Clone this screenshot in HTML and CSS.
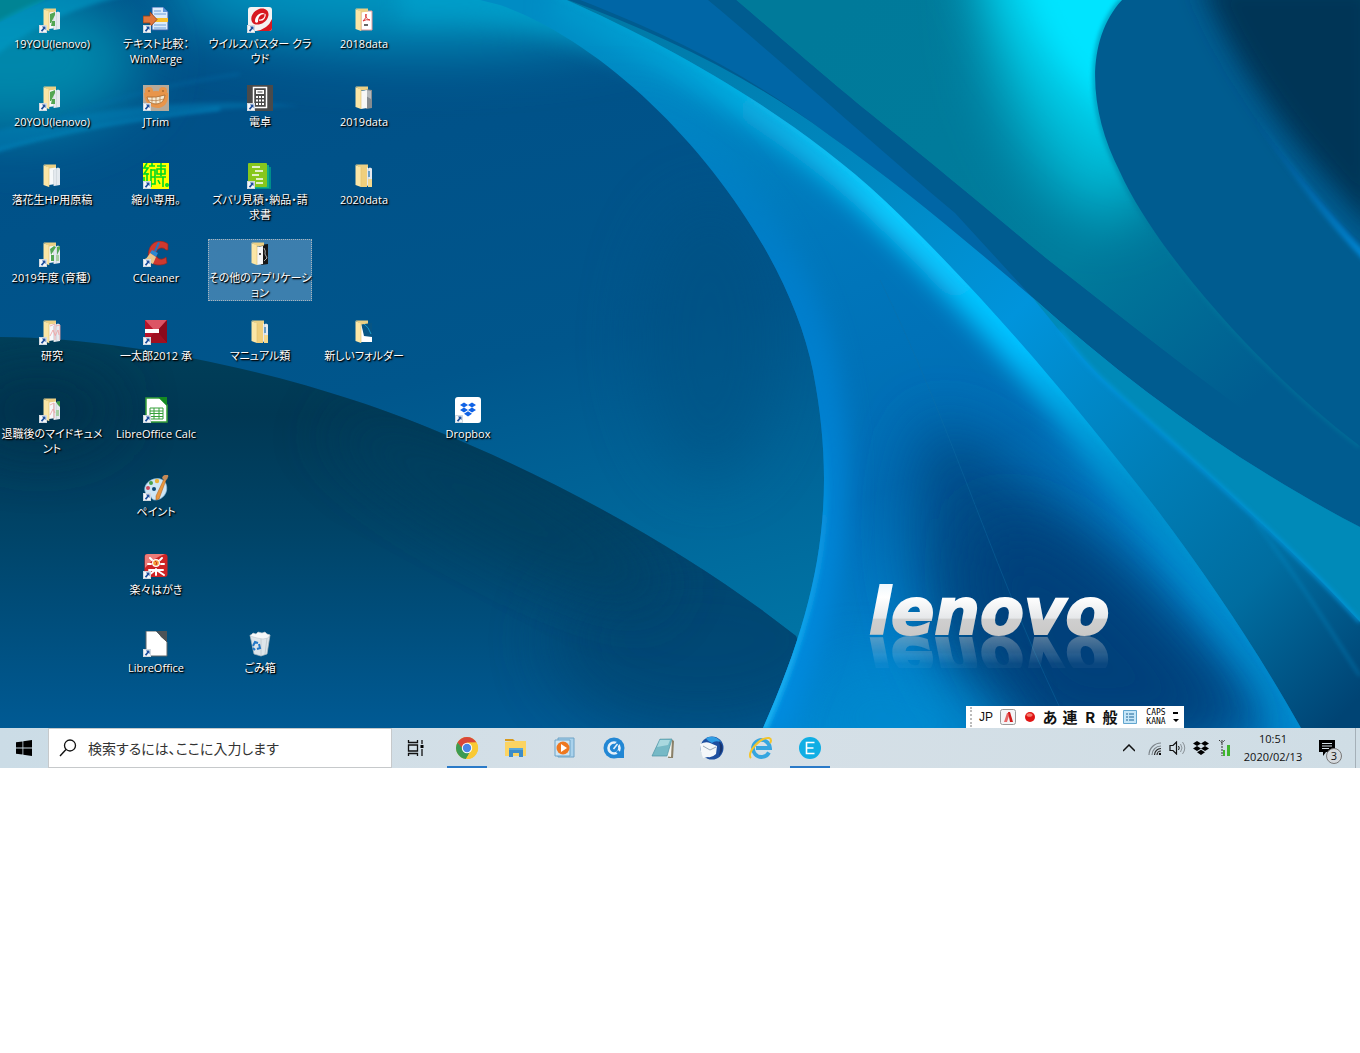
FILE: index.html
```html
<!DOCTYPE html>
<html lang="ja">
<head>
    <meta charset="utf-8">
    <title>デスクトップ</title>
    <link rel="stylesheet" href="styles.css">
</head>
<body>
<svg class="defs" aria-hidden="true">
    <symbol id="arrow" viewBox="0 0 8 8">
        <path d="M0 0h8v8H0z" fill="#f4f7fa"/>
        <path d="M.5.5h7v7h-7z" fill="none" stroke="#b9c3cc" stroke-width=".6"/>
        <path d="M3 1.6h3.5V5L5.4 4 3.3 6.8 1.8 5.8 4.1 2.9z" fill="#1f4f9c"/>
    </symbol>
    <symbol id="folder" viewBox="0 0 26 26">
        <path d="M4.500 1.500H17v3l-7 1z" fill="#ecd084"/>
        <path d="M4.500 2l5.500 2.500V24l-5.500-2z" fill="#fbe6a6"/>
        <path d="M10 4.500V24" stroke="#dfc070" stroke-width=".6"/>
    </symbol>
    <symbol id="papers" viewBox="0 0 26 26">
        <path d="M9 4l6-1.500 2 1V21l-7 1z" fill="#f7f9fa"/>
        <path d="M14 7l5-2.500 2 1V22l-6 1z" fill="#e4e9ee"/>
        <path d="M14.500 7v16M17.500 5.500V22" stroke="#c5ccd3" stroke-width=".5"/>
    </symbol>
    <symbol id="dropbox" viewBox="0 0 16 14">
        <path d="M4 0l4 2.500L4 5 0 2.500zM12 0l4 2.500L12 5 8 2.500zM4 5l4 2.500L4 10 0 7.500zM12 5l4 2.500-4 2.500-4-2.500zM8 8.800l4 2.500L8 14l-4-2.700z"/>
    </symbol>
</svg>

<main class="desktop">
    <svg class="wallpaper" viewBox="0 0 1360 728" preserveAspectRatio="xMidYMid slice" role="img" aria-label="lenovo">
        <defs>
            <linearGradient id="base" x1="0" y1="0" x2=".45" y2="1">
                <stop offset="0" stop-color="#004e86"/><stop offset=".55" stop-color="#00568c"/><stop offset="1" stop-color="#0078a8"/>
            </linearGradient>
            <linearGradient id="dark" x1="0" y1="0" x2="0" y2="1">
                <stop offset="0" stop-color="#00405a"/><stop offset=".2" stop-color="#003854"/><stop offset=".5" stop-color="#004468"/><stop offset="1" stop-color="#005a94"/>
            </linearGradient>
            <linearGradient id="teal" gradientUnits="userSpaceOnUse" x1="850" y1="0" x2="1230" y2="420">
                <stop offset="0" stop-color="#007a9a"/><stop offset=".6" stop-color="#007c9c"/><stop offset="1" stop-color="#005c90"/>
            </linearGradient>
            <linearGradient id="side" gradientUnits="userSpaceOnUse" x1="600" y1="0" x2="1330" y2="728">
                <stop offset="0" stop-color="#0078a4"/><stop offset=".3" stop-color="#0088c0"/><stop offset=".5" stop-color="#0094dc"/><stop offset=".72" stop-color="#007cb4"/><stop offset=".85" stop-color="#006da0"/><stop offset="1" stop-color="#004474"/>
            </linearGradient>
            <linearGradient id="ribbon" gradientUnits="userSpaceOnUse" x1="600" y1="40" x2="900" y2="728">
                <stop offset="0" stop-color="#008cc4"/><stop offset=".35" stop-color="#0078bc"/><stop offset=".7" stop-color="#006cb4"/><stop offset="1" stop-color="#008cd8"/>
            </linearGradient>
            <linearGradient id="shine" gradientUnits="userSpaceOnUse" x1="560" y1="0" x2="1250" y2="660">
                <stop offset="0" stop-color="#00a0d0" stop-opacity=".5"/><stop offset=".4" stop-color="#10ccff"/><stop offset=".6" stop-color="#00c0ff"/><stop offset=".8" stop-color="#0098d0" stop-opacity=".7"/><stop offset="1" stop-color="#0098d0" stop-opacity=".3"/>
            </linearGradient>
            <linearGradient id="inner" gradientUnits="userSpaceOnUse" x1="0" y1="60" x2="0" y2="728">
                <stop offset="0" stop-color="#0084c8" stop-opacity="0"/><stop offset=".35" stop-color="#0080d0" stop-opacity=".8"/><stop offset="1" stop-color="#008ce0"/>
            </linearGradient>
            <linearGradient id="edge" gradientUnits="userSpaceOnUse" x1="0" y1="420" x2="0" y2="728">
                <stop offset="0" stop-color="#10aaf0" stop-opacity="0"/><stop offset="1" stop-color="#18b0f0"/>
            </linearGradient>
            <linearGradient id="rim" gradientUnits="userSpaceOnUse" x1="1257" y1="116" x2="1360" y2="262">
                <stop offset="0" stop-color="#0070b8" stop-opacity="0"/><stop offset="1" stop-color="#0088d8"/>
            </linearGradient>
            <linearGradient id="metal" x1="0" y1="0" x2="0" y2="1">
                <stop offset="0" stop-color="#e4f2fa"/><stop offset=".3" stop-color="#fff"/><stop offset=".58" stop-color="#e6e8ea"/><stop offset=".6" stop-color="#cfcfcf"/><stop offset="1" stop-color="#c4c2c0"/>
            </linearGradient>
            <linearGradient id="fade" gradientUnits="userSpaceOnUse" x1="0" y1="636" x2="0" y2="664">
                <stop offset="0" stop-color="#fff" stop-opacity=".42"/><stop offset="1" stop-color="#fff" stop-opacity=".04"/>
            </linearGradient>
            <filter id="b2" x="-20%" y="-20%" width="140%" height="140%"><feGaussianBlur stdDeviation="2"/></filter>
            <filter id="b12" x="-50%" y="-50%" width="200%" height="200%"><feGaussianBlur stdDeviation="12"/></filter>
            <filter id="b30" x="-80%" y="-80%" width="260%" height="260%"><feGaussianBlur stdDeviation="30"/></filter>
            <clipPath id="clip-ribbon"><path d="M440-10L500 5C640 55 785 230 813 371 838 500 820 600 763 728H1301C1260 655 1210 580 1158 511 1072 400 985 296 884 200 790 112 660 40 555-5z"/></clipPath>
            <clipPath id="clip-teal"><path d="M736 0C800 55 840 90 884 125 940 170 990 212 1048 260 1150 340 1250 420 1360 490V0z"/></clipPath>
            <clipPath id="clip-petal"><path d="M1122 0C1085 40 1088 110 1120 172 1155 250 1260 370 1360 446V0z"/></clipPath>
            <clipPath id="clip-dark"><path d="M0 337C150 338 330 385 439 432 570 485 700 560 796 636L830 728H0z"/></clipPath>
            <mask id="mask-fade"><path d="M850 636h310v32H850z" fill="url(#fade)"/></mask>
        </defs>
        <path d="M0 0h1360v728H0z" fill="url(#base)"/>

        <!-- glow along the top and left -->
        <ellipse cx="420" cy="-10" rx="260" ry="56" fill="#0094c0" filter="url(#b30)"/>
        <path d="M400-30H560Q640 20 680 90 560 10 400 20z" fill="#00a0cc" opacity=".8" filter="url(#b12)"/>
        <ellipse cx="10" cy="60" rx="130" ry="70" fill="#0088ac" filter="url(#b30)"/>
        <path d="M0 0h46L0 22z" fill="#008494"/>
        <path d="M-10 26C20 8 40 0 70-8h70C60 10 30 30-10 60z" fill="#009cc8" opacity=".6" filter="url(#b2)"/>
        <path d="M-10 152C80 122 180 108 300 106 200 96 80 110-10 132z" fill="#0080b8" opacity=".5" filter="url(#b2)"/>
        <path d="M-5 151C60 132 110 122 220 109" fill="none" stroke="#00a4e0" stroke-width="2" opacity=".7" filter="url(#b2)"/>
        <path d="M60 118C120 96 180 82 240 74" fill="none" stroke="#0070ac" stroke-width="2" opacity=".6" filter="url(#b2)"/>
        <ellipse cx="710" cy="340" rx="70" ry="140" fill="#005080" opacity=".5" filter="url(#b30)"/>

        <!-- lower left hill -->
        <path d="M0 337C150 338 330 385 439 432 570 485 700 560 796 636L830 728H0z" fill="url(#dark)"/>
        <g clip-path="url(#clip-dark)">
            <ellipse cx="700" cy="640" rx="150" ry="90" fill="#004470" opacity=".7" filter="url(#b30)"/>
            <ellipse cx="500" cy="510" rx="190" ry="34" fill="#004060" opacity=".8" transform="rotate(28 500 510)" filter="url(#b30)"/>
            <ellipse cx="40" cy="410" rx="80" ry="40" fill="#00304c" opacity=".8" filter="url(#b30)"/>
        </g>

        <!-- upper right -->
        <path d="M560 0C650 30 745 72 829 135 900 185 965 240 1032 297 1130 385 1240 465 1360 527V0z" fill="#005c90"/>
        <path d="M580 0H708C780 60 880 150 955 213L1032 297C965 240 900 185 829 135 745 72 670 35 580 0z" fill="#0066a6"/>
        <g clip-path="url(#clip-teal)">
            <path d="M736 0C800 55 840 90 884 125 940 170 990 212 1048 260 1150 340 1250 420 1360 490V0z" fill="url(#teal)"/>
            <ellipse cx="1075" cy="50" rx="80" ry="170" fill="#00b8d4" transform="rotate(-14 1075 50)" filter="url(#b30)"/>
            <path d="M980-60H1150V150Q1040 110 980-60z" fill="#00e0fc" filter="url(#b30)"/>
            <path d="M1030-30H1130V110Q1060 80 1030-30z" fill="#00e4ff" filter="url(#b12)"/>
        </g>
        <path d="M1122 0C1085 40 1088 110 1120 172 1155 250 1260 370 1360 446" fill="none" stroke="#00789c" stroke-width="5" opacity=".6" filter="url(#b2)"/>
        <path d="M1122 0C1085 40 1088 110 1120 172 1155 250 1260 370 1360 446V0z" fill="#005c90"/>
        <g clip-path="url(#clip-petal)">
            <path d="M1257 116C1290 170 1325 215 1370 262" fill="none" stroke="url(#rim)" stroke-width="7" filter="url(#b2)"/>
            <path d="M1200-20C1230 60 1290 145 1380 236V-20z" fill="#003656" filter="url(#b12)"/>
        </g>

        <!-- band to the right of the ribbon -->
        <path d="M555-5C650 30 745 72 829 135 900 185 965 240 1032 297 1130 385 1240 465 1360 527V728H1290L884 200z" fill="url(#side)"/>
        <path d="M1032 297C1130 385 1240 465 1360 527V622C1290 545 1200 468 1114 390 1080 358 1055 325 1032 297z" fill="#008ab8"/>
        <path d="M1060 330C1080 358 1095 374 1114 390 1200 468 1290 545 1360 622" fill="none" stroke="#0098e0" stroke-width="3" filter="url(#b2)"/>
        <path d="M1255 522C1300 580 1330 630 1360 676" fill="none" stroke="#0090cc" stroke-width="2" opacity=".6" filter="url(#b2)"/>

        <!-- ribbon -->
        <g clip-path="url(#clip-ribbon)">
            <path d="M430-10H1310V738H750z" fill="url(#ribbon)"/>
            <path d="M930 420C1010 450 1140 550 1290 738H1010C930 690 890 560 930 420z" fill="#004c86" filter="url(#b30)"/>
            <path d="M980 520C1050 500 1160 610 1250 738H1050C990 670 960 600 980 520z" fill="#00407a" filter="url(#b30)"/>
            <path d="M840 660L1000 700V760H800z" fill="#0088c8" opacity=".6" filter="url(#b30)"/>
            <path d="M555-5C660 40 790 112 884 200 985 296 1072 400 1158 511 1210 580 1260 655 1301 728" fill="none" stroke="url(#shine)" stroke-width="46" filter="url(#b12)"/>
            <path d="M555-5C660 40 790 112 884 200 985 296 1072 400 1158 511 1210 580 1260 655 1301 728" fill="none" stroke="url(#shine)" stroke-width="8" opacity=".6" filter="url(#b2)"/>
            <path d="M500 5C640 55 785 230 813 371 838 500 820 600 763 728" fill="none" stroke="url(#inner)" stroke-width="50" filter="url(#b12)"/>
            <path d="M813 371C838 500 820 600 763 728" fill="none" stroke="url(#edge)" stroke-width="10" filter="url(#b2)"/>
            <path d="M880 280C950 420 1000 590 1070 728" fill="none" stroke="#1070a8" opacity=".4"/>
        </g>

        <g font-family="DejaVu Sans" font-weight="700" font-style="italic" font-size="64">
            <text id="brand" x="869" y="634" fill="url(#metal)" stroke="url(#metal)" stroke-width="2">lenovo</text>
            <g mask="url(#mask-fade)"><use href="#brand" transform="matrix(1 0 0 -1 0 1272)"/></g>
        </g>
    </svg>

    <div class="icons">
        <ul class="column">
            <li><a class="item" href="#"><svg viewBox="0 0 26 26"><use href="#papers"/><path d="M11 7l5-2v3l-4 8h-1zM13 14h3v5h-4z" fill="#53a653"/><use href="#folder"/><use href="#arrow" x="0" y="18" width="8" height="8"/></svg><span>19YOU(lenovo)</span></a></li>
            <li><a class="item" href="#"><svg viewBox="0 0 26 26"><use href="#papers"/><path d="M11 7l5-2v3l-4 8h-1zM13 14h3v5h-4z" fill="#53a653"/><use href="#folder"/><use href="#arrow" x="0" y="18" width="8" height="8"/></svg><span>20YOU(lenovo)</span></a></li>
            <li><a class="item" href="#"><svg viewBox="0 0 26 26"><use href="#papers"/><use href="#folder"/></svg><span>落花生HP用原稿</span></a></li>
            <li><a class="item" href="#"><svg viewBox="0 0 26 26"><use href="#papers"/><path d="M11 8l4-3 2 1-5 8zM12 14h3v6h-3zM18 6l3-1v3l-3 6z" fill="#53a653"/><path d="M17 14h3v6h-3z" fill="#a7cfa3"/><use href="#folder"/><use href="#arrow" x="0" y="18" width="8" height="8"/></svg><span>2019年度 (育種）</span></a></li>
            <li><a class="item" href="#"><svg viewBox="0 0 26 26"><use href="#papers"/><path d="M11 7l5-2v16M17 7l4-1v15M11 17l3-6 2 5M16 17l3-6 1 5" fill="none" stroke="#eda0a0" stroke-width=".8"/><use href="#folder"/><use href="#arrow" x="0" y="18" width="8" height="8"/></svg><span>研究</span></a></li>
            <li><a class="item" href="#"><svg viewBox="0 0 26 26"><use href="#papers"/><path d="M17 5l4-1v6l-2-2z" fill="#3f9a45"/><path d="M11 8l4-2v15M11 18l3-6 2 4" fill="none" stroke="#eda0a0" stroke-width=".8"/><path d="M17 13h3v6h-3z" fill="#a7cfa3"/><use href="#folder"/><use href="#arrow" x="0" y="18" width="8" height="8"/></svg><span>退職後のマイドキュメ<br>ント</span></a></li>
        </ul>
        <ul class="column">
            <li><a class="item" href="#"><svg viewBox="0 0 26 26"><path d="M9 0h11l5 5v18H9z" fill="#dcebfa" stroke="#2a5da8"/><path d="M20 0v5h5z" fill="#5d94d6"/><path d="M11 4h7M11 7h12M11 18h12M11 21h12" stroke="#6fa0d8"/><path d="M9 11h16v4H9z" fill="#f8c02c"/><path d="M0 9h7V5l7 7.500L7 20v-4H0z" fill="#e0763c" stroke="#8a3c18" stroke-width=".8"/><use href="#arrow" x="0" y="18" width="8" height="8"/></svg><span>テキスト比較：<br>WinMerge</span></a></li>
            <li><a class="item" href="#"><svg viewBox="0 0 26 26"><path d="M0 0h26v26H0z" fill="#b5aa9b"/><circle cx="6" cy="6" r="4" fill="#e8954a"/><circle cx="20" cy="6" r="4" fill="#e8954a"/><path d="M1 8Q13 4 25 8 26 21 16 23 2 23 1 8z" fill="#e8954a"/><path d="M4 12q9 1 18-2-1 9-9 9-8 0-9-7z" fill="#f6ead2" stroke="#a86a30" stroke-width=".8"/><path d="M5 15q8 2 16-1M9 12v6M13 12v7M17 11v7" fill="none" stroke="#a86a30" stroke-width=".6"/><circle cx="6" cy="6" r="1" fill="#a86a30"/><circle cx="20" cy="6" r="1" fill="#a86a30"/><use href="#arrow" x="0" y="18" width="8" height="8"/></svg><span>JTrim</span></a></li>
            <li><a class="item" href="#"><svg viewBox="0 0 26 26"><path d="M0 0h26v26H0z" fill="#ff0"/><g stroke="#00d820" stroke-width="1.600" fill="none"><path d="M4 0L1 5h4L1 11h5M4 10v14M1 14v4M6 3h6M9 0v3M8 6v18M8 7h4v14H8M8 14h4M14 3h9M18 0v13M14 6h8v5h-8zM13 14h10M20 14v10M15 17l2 4"/><circle cx="24" cy="22" r="1.200"/></g><use href="#arrow" x="0" y="18" width="8" height="8"/></svg><span>縮小専用。</span></a></li>
            <li><a class="item" href="#"><svg viewBox="0 0 26 26"><path d="M25 3C17-3 8 1 6 9 3 18 9 25 17 24c3 0 5-1 7-2l-1-6c-4 4-10 2-10-3 0-6 7-8 10-4h2z" fill="#cf392f" stroke="#94261f" stroke-width=".7"/><path d="M15 1l2 1-4 9-2-1z" fill="#2a72be"/><path d="M9 9l6 3-2 4-6-4z" fill="#2c88d0"/><path d="M7 12l6 4-3 7-10-4q5-2 7-7z" fill="#eac78d"/><use href="#arrow" x="0" y="18" width="8" height="8"/></svg><span>CCleaner</span></a></li>
            <li><a class="item" href="#"><svg viewBox="0 0 26 26"><path d="M2 1h22v23H2z" fill="#b8142a"/><path d="M2 1h22l-9 10H11z" fill="#dc5464"/><path d="M24 1v23l-9-10v-3z" fill="#8c0a1c"/><path d="M2 24l9-10h4l9 10z" fill="#a01020"/><path d="M2 10h14v4H2z" fill="#fff"/><use href="#arrow" x="0" y="18" width="8" height="8"/></svg><span>一太郎2012 承</span></a></li>
            <li><a class="item" href="#"><svg viewBox="0 0 26 26"><path d="M3 1h14l7 7v17H3z" fill="#fff" stroke="#36a03a" stroke-width="1.500"/><path d="M15 0h9v9z" fill="#158a22"/><path d="M7 11h13v11H7zM7 14h13M7 16.500h13M7 19.500h13M11 11v11M16 11v11" fill="none" stroke="#36a03a"/><use href="#arrow" x="0" y="18" width="8" height="8"/></svg><span>LibreOffice Calc</span></a></li>
            <li><a class="item" href="#"><svg viewBox="0 0 26 26"><path d="M2 12C5 3 19 0 23 9c3 8-3 16-11 16-4 0-3-4-6-5-3 0-5-4-4-8z" fill="#cfe6f5" stroke="#86b7d8" stroke-width=".7"/><circle cx="5" cy="13" r="2" fill="#c9485b"/><circle cx="8" cy="8" r="2" fill="#46a14b"/><circle cx="14" cy="6" r="2.200" fill="#e8b23a"/><circle cx="11" cy="14" r="2" fill="#0e4874"/><path d="M21 4l2 1-7 19-3 1 0-4z" fill="#e9973e" stroke="#a75b18" stroke-width=".5"/><path d="M19 3q1-4 6-3 1 3-3 6z" fill="#c58a57"/><use href="#arrow" x="0" y="18" width="8" height="8"/></svg><span>ペイント</span></a></li>
            <li><a class="item" href="#"><svg viewBox="0 0 26 26"><rect x="1.500" y="1" width="23" height="23" rx="3" fill="#cf2325"/><path d="M2 3q0-2 3-2h17Q10 5 2 15z" fill="#ed7b78"/><g stroke="#fff" stroke-width="2" fill="none" stroke-linecap="round"><path d="M7 5l2 2M19 5l-2 2M5 11l3 0M21 11l-3 0M6 17h14M13 16v6M11 18l-5 4M15 18l6 4"/></g><circle cx="13" cy="10" r="4" fill="#fff"/><circle cx="13" cy="10" r="2.800" fill="#f4a035"/><path d="M12 8q3 1 1 4" fill="none" stroke="#cf2325"/><use href="#arrow" x="0" y="18" width="8" height="8"/></svg><span>楽々はがき</span></a></li>
            <li><a class="item" href="#"><svg viewBox="0 0 26 26"><path d="M3 0h10l11 11v14H3z" fill="#fff" stroke="#5d6469"/><path d="M14 0h10v11L18 6z" fill="#4d5357"/><use href="#arrow" x="0" y="18" width="8" height="8"/></svg><span>LibreOffice</span></a></li>
        </ul>
        <ul class="column">
            <li><a class="item" href="#"><svg viewBox="0 0 26 26"><rect x="1" y="0" width="24" height="24" rx="3" fill="#f3f3f3"/><path d="M25 12v9q0 3-3 3H9q12-2 16-12z" fill="#d71920"/><path d="M12 2c7-2 11 3 9 8-2 6-9 9-14 7-5-3-3-12 5-15z" fill="#d71920"/><path d="M8 14c0-5 6-10 10-7-5 0-7 3-7 8-1 1-3 1-3-1z" fill="#fff"/><path d="M12 13c4 1 7-3 6-6" fill="none" stroke="#fff" stroke-width="1.200"/><use href="#arrow" x="0" y="18" width="8" height="8"/></svg><span>ウイルスバスター クラ<br>ウド</span></a></li>
            <li><a class="item" href="#"><svg viewBox="0 0 26 26"><path d="M0 0h26v26H0z" fill="#4a4a4a"/><path d="M6.500 2.500h13v20h-13z" fill="none" stroke="#fff" stroke-width="1.500"/><path d="M9 5h8v4H9z" fill="#fff"/><path d="M10.500 7h5" stroke="#4a4a4a"/><path d="M9 11h2v2H9zM12 11h2v2h-2zM15 11h2v2h-2zM9 14.500h2v2H9zM12 14.500h2v2h-2zM15 14.500h2v2h-2zM9 18h2v2H9zM12 18h2v2h-2zM15 18h2v2h-2z" fill="#fff"/><use href="#arrow" x="0" y="18" width="8" height="8"/></svg><span>電卓</span></a></li>
            <li><a class="item" href="#"><svg viewBox="0 0 26 26"><path d="M8 4h16v22H8z" fill="#008e8a"/><path d="M5 2h17v23H5z" fill="#12ad85"/><rect x="1" y="0" width="19" height="24" rx="1" fill="#87c71c"/><path d="M5 4h8M8 8h8M5 12h7M9 16h7M9 20h7" stroke="#fff" stroke-width="1.600"/><use href="#arrow" x="0" y="18" width="8" height="8"/></svg><span>ズバリ見積・納品・請<br>求書</span></a></li>
            <li><a class="item selected" href="#"><svg viewBox="0 0 26 26"><path d="M12 4l9-1v20l-7 1z" fill="#161616"/><path d="M17 7q2 3 1 6l2 4-3 3" fill="none" stroke="#aaa"/><path d="M10 6l6-1v18l-6 1z" fill="#f6f6f6"/><path d="M12 12h2v2h-2z" fill="#555"/><use href="#folder"/></svg><span>その他のアプリケーシ<br>ョン</span></a></li>
            <li><a class="item" href="#"><svg viewBox="0 0 26 26"><use href="#papers"/><path d="M10 4h6v20h-6z" fill="#f0cf7c"/><path d="M17 8h2v6h-2z" fill="#6b9fc6"/><path d="M17 16h4v8h-4z" fill="#f4d88d"/><use href="#folder"/></svg><span>マニュアル類</span></a></li>
            <li class="row9"><a class="item" href="#"><svg viewBox="0 0 26 26"><path d="M3 4l20 0-3 19-6 2-7-2z" fill="#dde5ea" stroke="#aebac2" stroke-width=".7"/><path d="M3 5l3-3 3 1 2-2 4 1 3-1 2 2 3 1-2 3-5 1-6-1z" fill="#f6f8f9" stroke="#bfc8ce" stroke-width=".6"/><path d="M14 8l0 16M20 7l-2 16" stroke="#c2ccd2"/><path d="M6 15l2-4 3 1M12 13l1 4-3 1M8 19l-2-2" fill="none" stroke="#2278c8" stroke-width="2"/></svg><span>ごみ箱</span></a></li>
        </ul>
        <ul class="column">
            <li><a class="item" href="#"><svg viewBox="0 0 26 26"><path d="M10 4h11v19H10z" fill="#fff" stroke="#e39a98"/><path d="M12 14q4-3 3-7-1 5 4 6-4-1-7 1z" fill="none" stroke="#dc3c3c"/><path d="M13 17h4v2h-4z" fill="#666"/><use href="#folder"/></svg><span>2018data</span></a></li>
            <li><a class="item" href="#"><svg viewBox="0 0 26 26"><path d="M14 4l7 1v18l-6 1z" fill="#858b90"/><path d="M15 5l5 1v8l-5-3z" fill="#b4b8bb"/><path d="M10 6l6-1v18l-6 1z" fill="#f7f7f7"/><use href="#folder"/></svg><span>2019data</span></a></li>
            <li><a class="item" href="#"><svg viewBox="0 0 26 26"><use href="#papers"/><path d="M10 4h6v20h-6z" fill="#f0cf7c"/><path d="M17 8h2v6h-2z" fill="#6b9fc6"/><path d="M17 16h4v8h-4z" fill="#f4d88d"/><use href="#folder"/></svg><span>2020data</span></a></li>
            <li class="row5"><a class="item" href="#"><svg viewBox="0 0 26 26"><path d="M10 4h11v19H10z" fill="#fff"/><path d="M10 4h11v14l-8-1z" fill="#075584"/><path d="M12 4q6 4 8 11" fill="none" stroke="#1b9ccc"/><use href="#folder"/></svg><span>新しいフォルダー</span></a></li>
        </ul>
        <ul class="column">
            <li class="row6"><a class="item" href="#"><svg viewBox="0 0 26 26"><rect width="26" height="26" rx="3" fill="#fff"/><use href="#dropbox" x="5" y="5" width="16" height="15" fill="#0f62e6"/><use href="#arrow" x="0" y="18" width="8" height="8"/></svg><span>Dropbox</span></a></li>
        </ul>
    </div>

    <div class="ime">
        <span class="grip"></span>
        <button class="lang">JP</button>
        <button aria-label="ATOK"><svg width="16" height="16" viewBox="0 0 16 16"><rect x=".5" y=".5" width="15" height="15" rx="2" fill="#f4f4f6" stroke="#999"/><path d="M4 13l3-9h2v3l-2 6z" fill="#e86868"/><path d="M8 3h2l3 10h-3z" fill="#d01818"/></svg></button>
        <button aria-label="記録"><svg width="12" height="12" viewBox="0 0 12 12"><circle cx="6" cy="6" r="5" fill="#e01414"/><ellipse cx="5.500" cy="4" rx="3" ry="1.800" fill="#f47a6c"/></svg></button>
        <button>あ</button>
        <button>連</button>
        <button>R</button>
        <button>般</button>
        <button aria-label="メニュー"><svg width="14" height="14" viewBox="0 0 14 14"><path d="M.5.5h13v13H.5z" fill="#c6e6f8" stroke="#62a6cf"/><path d="M3 4h2M3 7h2M3 10h2M6 4h5M6 7h5M6 10h5" stroke="#1d6496"/></svg></button>
        <span class="locks"><span>CAPS</span><span>KANA</span></span>
        <button aria-label="オプション"><svg width="6" height="12" viewBox="0 0 6 12"><path d="M0 1h5v2H0zM0 8h6L3 11z"/></svg></button>
    </div>
</main>

<footer class="taskbar">
    <button class="start" aria-label="スタート"><svg width="16" height="16" viewBox="0 0 16 16"><path d="M0 2.300L6.500 1.400V7.600H0zM7.300 1.300L16 0v7.600H7.300zM0 8.400h6.500v6.200L0 13.700zM7.300 8.400H16V16L7.300 14.700z"/></svg></button>
    <div class="search">
        <label for="q" aria-label="検索"><svg width="18" height="18" viewBox="0 0 18 18"><circle cx="11" cy="6.500" r="5.500" fill="none" stroke="#111" stroke-width="1.300"/><path d="M7 10.500L1 17" stroke="#111" stroke-width="1.400"/></svg></label>
        <input id="q" type="text" placeholder="検索するには、ここに入力します">
    </div>
    <button class="start" aria-label="タスク ビュー"><svg width="18" height="16" viewBox="0 0 18 16"><path d="M1.500 0v2.500h9V0M1.500 16v-2.500h9V16M1.500 5h9v6h-9zM15 0v4M15 9v7" fill="none" stroke="#111" stroke-width="1.300"/><path d="M13.500 5h3v3h-3z"/></svg></button>
    <nav class="apps">
        <button class="running" aria-label="Chrome"><svg width="24" height="24" viewBox="0 0 24 24"><circle cx="12" cy="12" r="11" fill="#f9c934"/><path d="M2.500 6.500A11 11 0 0 1 21.500 6.500L12 7l-3 9z" fill="#d9473a"/><path d="M2.500 6.500A11 11 0 0 0 11 23l5-9-8-1z" fill="#3c9b53"/><path d="M11 23A11 11 0 0 0 21.500 6.500H12l4 8z" fill="#f9c934"/><circle cx="12" cy="12" r="5.200" fill="#fff"/><circle cx="12" cy="12" r="4.200" fill="#4a86e8"/></svg></button>
        <button aria-label="エクスプローラー"><svg width="22" height="20" viewBox="0 0 22 20"><path d="M0 1h8l2 2H0z" fill="#d99a1c"/><path d="M0 4L9 3h12v15H0z" fill="#fcd462"/><path d="M4 10h14v9h-4v-4H8v4H4z" fill="#3c8cc8"/><path d="M4 10h14v2H4z" fill="#5aa8da"/></svg></button>
        <button aria-label="メディア プレーヤー"><svg width="22" height="22" viewBox="0 0 22 22"><path d="M4 1h16v19H4z" fill="#a9d2ec" stroke="#6ea3c6"/><path d="M1 3h15v16H1z" fill="#cde5f4" stroke="#6ea3c6"/><circle cx="9" cy="11" r="6.500" fill="#ee7820"/><path d="M7 7l6 4-6 4z" fill="#fff"/></svg></button>
        <button aria-label="QuickTime"><svg width="22" height="22" viewBox="0 0 22 22"><circle cx="11" cy="11" r="10.500" fill="#2287d4"/><path d="M12 11h9v10h-9z" fill="#2287d4"/><circle cx="11" cy="11" r="5.500" fill="none" stroke="#e6f1fa" stroke-width="2.600"/><path d="M10 12l6-7" stroke="#2287d4" stroke-width="3.500"/><path d="M10.500 12l4-5" stroke="#e6f1fa" stroke-width="1.500"/><path d="M14 14l3 3" stroke="#2287d4" stroke-width="3"/></svg></button>
        <button aria-label="メモ帳"><svg width="24" height="22" viewBox="0 0 24 22"><path d="M20 2l3 2-1 17-5 0z" fill="#8a8068"/><path d="M9 1l12 1-1 18-5-1z" fill="#f4f4ee"/><path d="M9 2h12l-5 17H1z" fill="#76b9c6" stroke="#4e93a3" stroke-width=".7"/><path d="M9 3h10l-2 5-11 2z" fill="#a9d8df"/></svg></button>
        <button aria-label="Thunderbird"><svg width="26" height="24" viewBox="0 0 26 24"><circle cx="13" cy="12" r="11.500" fill="#1e4fa0"/><path d="M7 2q9-4 15 4-6-2-9 1-6-3-6-5z" fill="#2f9de4"/><path d="M1 8q6-3 10-1l7 3-1 8q-4 4-8 3l-5 1-2-6z" fill="#f4f7fa"/><path d="M4 10l7 4 6-3" fill="none" stroke="#9aa9b8"/><path d="M20 5q7 7 0 15 2-8 0-15z" fill="#17346e"/></svg></button>
        <button aria-label="Internet Explorer"><svg width="24" height="24" viewBox="0 0 24 24"><path d="M20 16.500a8.500 8.500 0 1 1 1-4.500H7" fill="none" stroke="#36a6e0" stroke-width="3.800"/><path d="M2 22C-3 17 11 1 20 2c3 1 2 4 1 5" fill="none" stroke="#f4c52e" stroke-width="2"/></svg></button>
        <button class="running" aria-label="E"><svg width="22" height="22" viewBox="0 0 22 22"><circle cx="11" cy="11" r="11" fill="#10aee4"/><path d="M15.500 5.500H7.500v11h8M7.500 11h7" fill="none" stroke="#fff" stroke-width="1.600"/></svg></button>
    </nav>
    <div class="tray">
        <button aria-label="隠れているインジケーター"><svg width="12" height="8" viewBox="0 0 12 8"><path d="M0 7l6-6 6 6" fill="none" stroke="#111" stroke-width="1.500"/></svg></button>
        <button aria-label="ネットワーク"><svg width="13" height="13" viewBox="0 0 13 13"><path d="M1 13A12 12 0 0 1 13 1M4 13a9 9 0 0 1 9-9" fill="none" stroke="#7c848a" stroke-width="1.200"/><path d="M6.500 13A6.500 6.500 0 0 1 13 6.500M9 13a4 4 0 0 1 4-4" fill="none" stroke="#222" stroke-width="1.200"/><circle cx="12" cy="12" r="1.200"/></svg></button>
        <button aria-label="音量"><svg width="17" height="14" viewBox="0 0 17 14"><path d="M1 4.500h3L7.500 1v12L4 9.500H1z" fill="none" stroke="#111" stroke-width="1.200"/><path d="M9.500 5q1.500 2 0 4" fill="none" stroke="#111"/><path d="M11.500 3q3 4 0 8M13.500 1q4.500 6 0 12" fill="none" stroke="#8a9298"/></svg></button>
        <button aria-label="Dropbox"><svg width="16" height="14"><use href="#dropbox"/></svg></button>
        <button aria-label="電波"><svg width="12" height="18" viewBox="0 0 12 18"><path d="M0 1l3 3 3-3M3 1v16" fill="none" stroke="#333" stroke-dasharray="2 1"/><path d="M4 11h2v6H4zM8 6h3v11H8z" fill="#3fb52e"/></svg></button>
        <button class="clock"><time>10:51</time><time>2020/02/13</time></button>
        <button class="notice" aria-label="通知"><svg width="16" height="16" viewBox="0 0 16 16"><path d="M0 0h16v12H7l-3 4v-4H0z"/><path d="M3 3.500h10M3 6h10M3 8.500h7" stroke="#d3dfe6"/></svg><span class="badge">3</span></button>
        <button class="peek" aria-label="デスクトップの表示"></button>
    </div>
</footer>
</body>
</html>
```
FILE: styles.css
```css
body {
    margin: 0;
    background: #fff;
    font-family: "Open Sans", "Noto Sans CJK JP", sans-serif;
    font-size: 11px;
    font-feature-settings: "palt";
}
button {
    display: flex;
    align-items: center;
    justify-content: center;
    margin: 0;
    padding: 0;
    border: 0;
    background: none;
    color: #111;
    font: inherit;
}
.defs {
    position: absolute;
    width: 0;
    height: 0;
}

/* desktop */
.desktop {
    position: relative;
    overflow: hidden;
    background: #00548c;
}
.wallpaper {
    position: absolute;
    top: 0;
    left: 0;
    width: 100%;
    height: 100%;
}
.icons {
    position: relative;
    display: flex;
    padding: 5px 0 21px;
}
.column {
    display: grid;
    grid-template-rows: repeat(9, 78px);
    grid-template-columns: 104px;
    margin: 0;
    padding: 0;
    list-style: none;
}
.row5 {
    grid-row: 5;
}
.row6 {
    grid-row: 6;
}
.row9 {
    grid-row: 9;
}
.item {
    display: flex;
    flex-direction: column;
    align-items: center;
    gap: 3px;
    padding: 1px 0 0;
    border: 1px solid transparent;
    color: #fff;
    line-height: 15px;
    text-align: center;
    text-decoration: none;
    text-shadow: 1px 1px 2px #000, 1px 1px 1px #000;
    white-space: nowrap;
}
.item svg {
    width: 26px;
    height: 26px;
}
.item.selected {
    border: 1px dotted #a9b4bc;
    background: rgba(120, 170, 210, 0.5);
}

/* input method bar */
.ime {
    position: absolute;
    right: 176px;
    bottom: 0;
    display: grid;
    grid-template-columns: 10px 20px 24px 20px 20px 20px 20px 20px 20px 32px 8px;
    align-items: center;
    height: 22px;
    padding-right: 4px;
    background: #fff;
}
.ime button {
    font-family: "Noto Sans CJK JP", sans-serif;
    font-size: 15px;
    font-weight: 700;
    line-height: 20px;
}
.ime .lang {
    font-family: "Liberation Sans", sans-serif;
    font-size: 12px;
    font-weight: 400;
}
.grip {
    height: 20px;
    margin-left: 4px;
    border-left: 2px dotted #bbb;
}
.locks {
    display: flex;
    flex-direction: column;
    font-family: "DejaVu Sans Mono", monospace;
    font-size: 8px;
    line-height: 9px;
    text-align: center;
}

/* taskbar */
.taskbar {
    display: flex;
    height: 40px;
    background: linear-gradient(90deg, #cbdce6, #d6e0e7 50%, #cfdde5);
}
.start {
    width: 48px;
}
.search {
    display: flex;
    align-items: center;
    box-sizing: border-box;
    width: 344px;
    border: 1px solid #c6c9cb;
    background: #fff;
}
.search label {
    display: flex;
    padding: 0 11px 0 10px;
}
.search input {
    flex: 1;
    min-width: 0;
    padding: 0;
    border: 0;
    outline: 0;
    background: none;
    color: #333;
    font: inherit;
    font-size: 14px;
    font-feature-settings: "palt";
}
.search input::placeholder {
    color: #333;
    opacity: 1;
}
.apps {
    display: flex;
    padding-left: 2px;
}
.apps button {
    position: relative;
    width: 49px;
}
.apps .running::after {
    content: "";
    position: absolute;
    right: 4px;
    bottom: 0;
    left: 5px;
    height: 2px;
    background: #2a7ac8;
}
.tray {
    display: grid;
    grid-template-columns: 28px 22px 24px 24px 24px 72px 46px 5px;
    margin-left: auto;
}
.clock {
    flex-direction: column;
    line-height: 18px;
}
.notice {
    position: relative;
    padding-right: 10px;
}
.badge {
    position: absolute;
    right: 13px;
    bottom: 4px;
    box-sizing: border-box;
    width: 16px;
    height: 16px;
    border: 1px solid #777;
    border-radius: 50%;
    background: #d5dade;
    line-height: 14px;
}
.peek {
    border-left: 1px solid #a5b0b8;
}
```
